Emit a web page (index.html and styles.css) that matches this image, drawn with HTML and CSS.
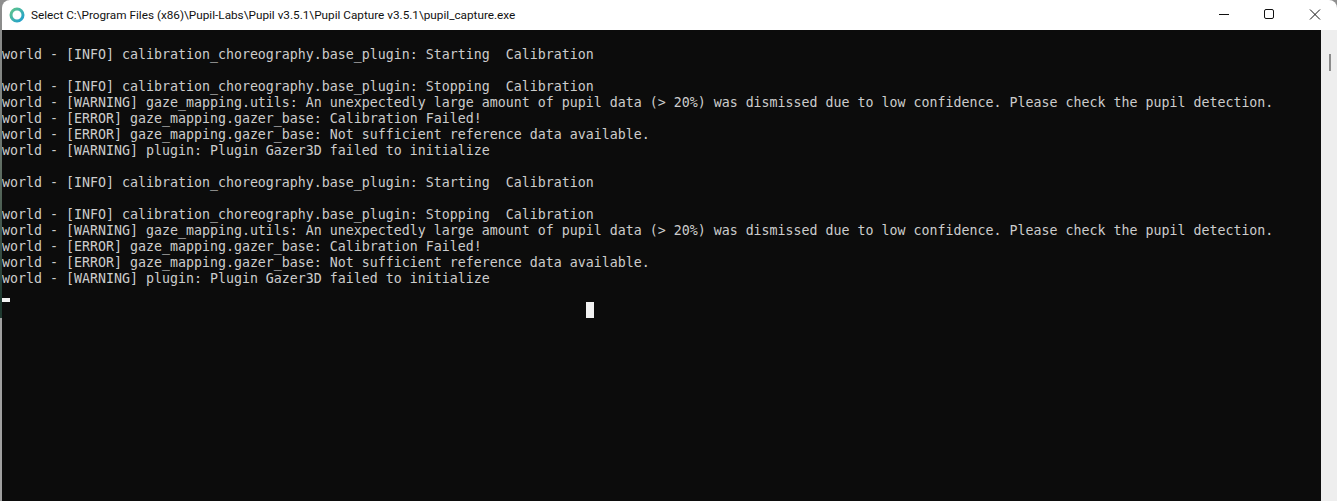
FILE: index.html
```html
<!DOCTYPE html>
<html lang="en">
<head>
<meta charset="utf-8">
<title>Pupil Capture</title>
<link rel="stylesheet" href="styles.css">
</head>
<body>
<div class="window">
  <header class="titlebar">
    <svg class="app-icon" width="16" height="16" viewBox="0 0 16 16">
      <defs><linearGradient id="ring" x1="0" y1="0" x2="1" y2="1"><stop offset="0" stop-color="#5fc48a"/><stop offset="1" stop-color="#1f9fd0"/></linearGradient></defs>
      <circle cx="8" cy="8" r="6" fill="none" stroke="url(#ring)" stroke-width="3"/>
    </svg>
    <span class="title">Select C:\Program Files (x86)\Pupil-Labs\Pupil v3.5.1\Pupil Capture v3.5.1\pupil_capture.exe</span>
    <div class="controls">
      <svg class="ctl" width="46" height="30" viewBox="0 0 46 30"><path d="M19 14.5h10" stroke="#111" fill="none"/></svg>
      <svg class="ctl" width="46" height="30" viewBox="0 0 46 30"><rect x="18.5" y="9.5" width="9" height="9" rx="1.5" stroke="#111" fill="none"/></svg>
      <svg class="ctl" width="46" height="30" viewBox="0 0 46 30"><path d="M18 9.5l10 10M28 9.5l-10 10" stroke="#111" fill="none"/></svg>
    </div>
  </header>
  <div class="body">
    <main class="console">
<pre class="log">

world - [INFO] calibration_choreography.base_plugin: Starting  Calibration

world - [INFO] calibration_choreography.base_plugin: Stopping  Calibration
world - [WARNING] gaze_mapping.utils: An unexpectedly large amount of pupil data (&gt; 20%) was dismissed due to low confidence. Please check the pupil detection.
world - [ERROR] gaze_mapping.gazer_base: Calibration Failed!
world - [ERROR] gaze_mapping.gazer_base: Not sufficient reference data available.
world - [WARNING] plugin: Plugin Gazer3D failed to initialize

world - [INFO] calibration_choreography.base_plugin: Starting  Calibration

world - [INFO] calibration_choreography.base_plugin: Stopping  Calibration
world - [WARNING] gaze_mapping.utils: An unexpectedly large amount of pupil data (&gt; 20%) was dismissed due to low confidence. Please check the pupil detection.
world - [ERROR] gaze_mapping.gazer_base: Calibration Failed!
world - [ERROR] gaze_mapping.gazer_base: Not sufficient reference data available.
world - [WARNING] plugin: Plugin Gazer3D failed to initialize
</pre>
      <div class="caret"></div>
      <div class="ibeam"></div>
    </main>
    <aside class="scrollbar"><div class="thumb"></div></aside>
  </div>
</div>
</body>
</html>
```
FILE: styles.css
```css
html, body { margin: 0; height: 100%; background: #0c0c0c; overflow: hidden; }
.window { display: flex; flex-direction: column; height: 501px; padding-left: 2px; box-sizing: border-box; background: linear-gradient(to bottom, #8f8f8f 0, #808480 100px, #5a6a5e 180px, #1f3a30 300px, #1f3a30 318px, #a0a0a0 318px, #a0a0a0 501px); }
.titlebar { display: flex; align-items: center; height: 30px; flex: none; background: #fff; padding-left: 7px; border-top-left-radius: 8px; border-top-right-radius: 8px; }
.app-icon { flex: none; }
.title { margin-left: 6px; font: 11.76px Roboto, "Open Sans", sans-serif; color: #111; white-space: nowrap; }
.controls { display: flex; margin-left: auto; margin-right: -1px; }
.ctl { display: block; }
.body { display: flex; flex: 1; min-height: 0; }
.console { position: relative; flex: 1; background: #0c0c0c; overflow: hidden; }
.log { margin: 0; padding-top: 1px; font: 13.29px/16px "DejaVu Sans Mono", monospace; color: #cccccc; white-space: pre; }
.caret { position: absolute; left: 0; top: 268px; width: 8px; height: 4px; background: #f2f2f2; }
.ibeam { position: absolute; left: 584px; top: 272px; width: 8px; height: 16px; background: #f2f2f2; }
.scrollbar { flex: none; width: 16px; background: #eeeeee; position: relative; }
.thumb { position: absolute; left: 8px; top: 24px; width: 2px; height: 17px; background: #8b8b8b; }
```
